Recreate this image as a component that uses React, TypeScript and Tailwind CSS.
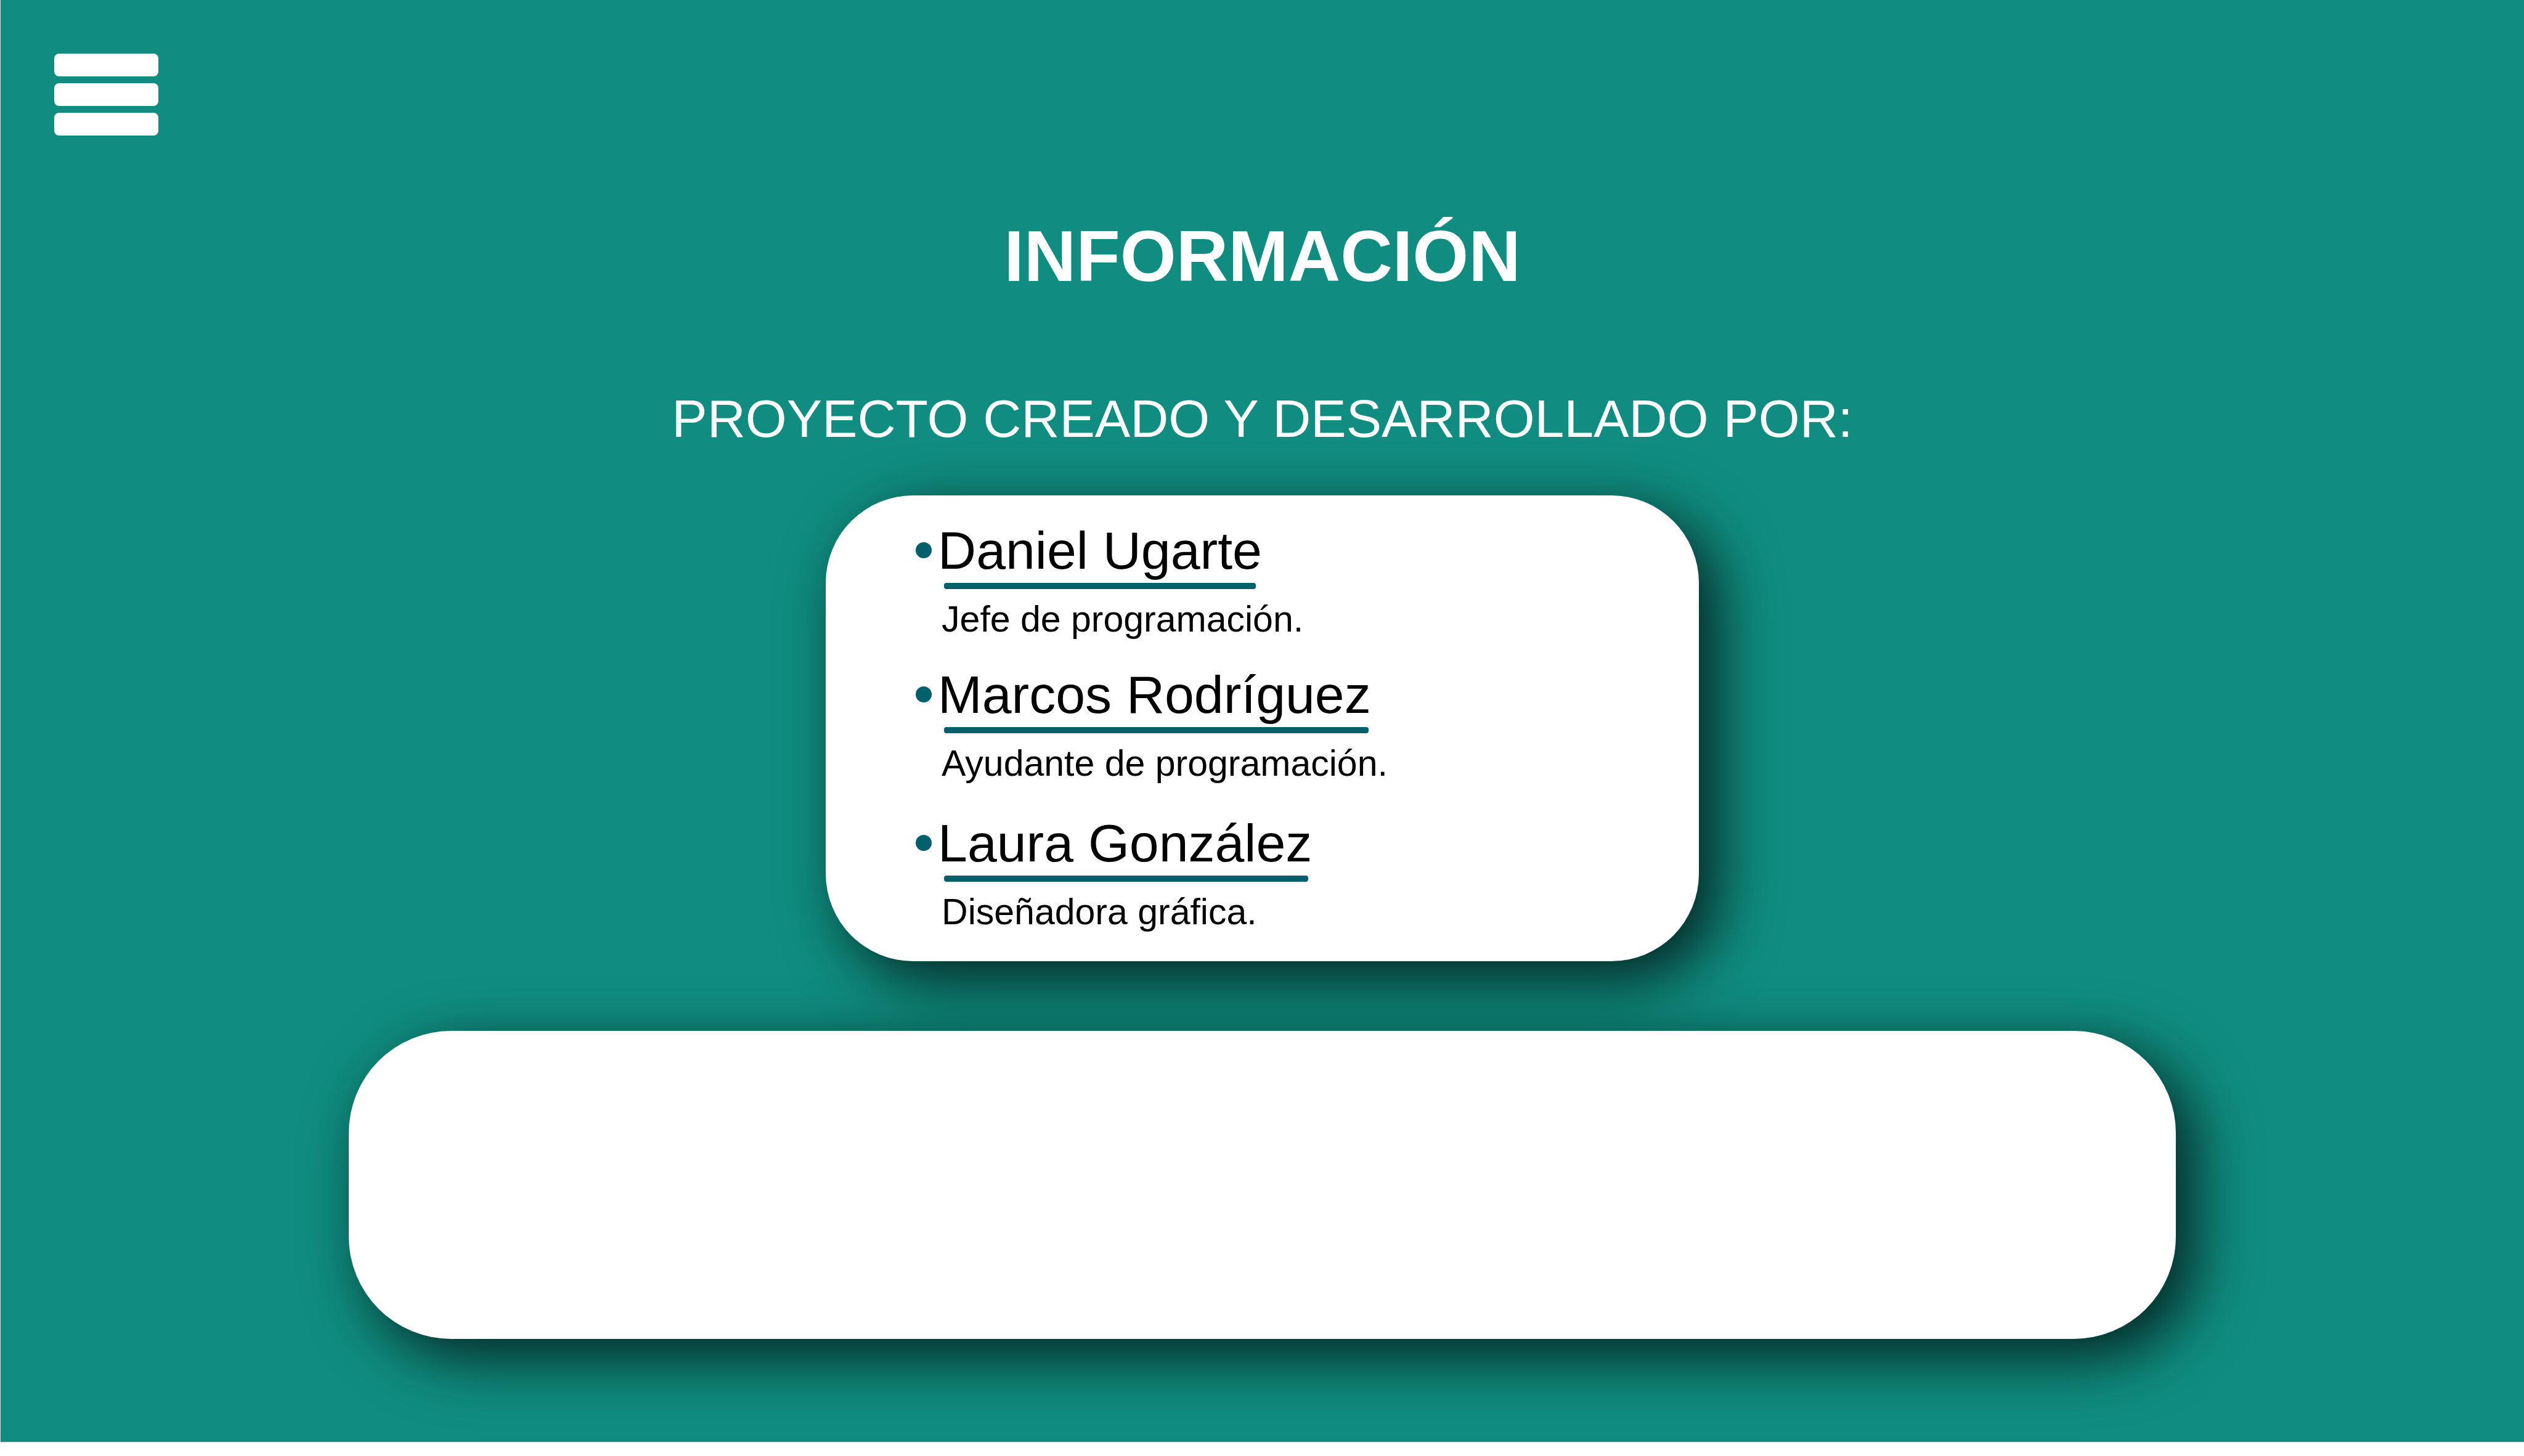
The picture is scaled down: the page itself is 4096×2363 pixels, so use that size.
type Member = {
  name: string;
  role: string;
  rule: string;
  spacing: string;
};

const members: Member[] = [
  { name: "Daniel Ugarte", role: "Jefe de programación.", rule: "mr-[10px]", spacing: "mb-[41px]" },
  { name: "Marcos Rodríguez", role: "Ayudante de programación.", rule: "mr-1", spacing: "mb-12" },
  { name: "Laura González", role: "Diseñadora gráfica.", rule: "mr-[6px]", spacing: "mb-0" },
];

function MenuButton() {
  return (
    <button
      type="button"
      aria-label="Abrir menú"
      className="flex w-[169px] cursor-pointer flex-col gap-[11px]"
    >
      <span className="h-[37px] w-full rounded-lg bg-white" />
      <span className="h-[37px] w-full rounded-lg bg-white" />
      <span className="h-[37px] w-full rounded-lg bg-white" />
    </button>
  );
}

function MemberItem({ name, role, rule, spacing }: Member) {
  return (
    <li className={`flex gap-[10px] ${spacing}`}>
      <span className="mt-[35px] size-[26px] shrink-0 rounded-full bg-[#01606b]" />
      <div className="flex flex-col items-start">
        <div className="w-fit">
          <h3 className="text-[86px] leading-[96px] whitespace-nowrap">{name}</h3>
          <div className={`mt-[5px] ml-[10px] h-[10px] rounded bg-[#01606b] ${rule}`} />
        </div>
        <p className="mt-4 ml-[6px] text-[59px] leading-[66px] whitespace-nowrap">{role}</p>
      </div>
    </li>
  );
}

export default function App() {
  return (
    <div className="flex min-h-screen flex-col bg-white pb-[22px] font-['Liberation_Sans',Arial,sans-serif]">
      <div className="flex flex-1 flex-col border-b border-l border-[#c3ddd9] bg-[#108d80] pb-[167px]">
        <header className="flex pt-[87px] pl-[87px]">
          <MenuButton />
        </header>
        <main className="flex flex-col items-center text-black">
          <h1 className="mt-[131px] text-[117px] leading-[130px] font-bold text-white">INFORMACIÓN</h1>
          <h2 className="mt-[150px] text-[86px] leading-[96px] text-white">
            PROYECTO CREADO Y DESARROLLADO POR:
          </h2>
          <section
            aria-label="Equipo"
            className="mt-[77px] w-[34.6%] min-w-fit rounded-[142px] bg-white pt-[41px] pb-[47px] pl-[146px] shadow-[30px_30px_100px_rgba(0,0,0,0.75)]"
          >
            <ul>
              {members.map((m) => (
                <MemberItem key={m.name} {...m} />
              ))}
            </ul>
          </section>
          <section
            aria-label="Información adicional"
            className="mt-[113px] min-h-[500px] w-[72.4%] rounded-[166px] bg-white shadow-[30px_30px_100px_rgba(0,0,0,0.75)]"
          />
        </main>
      </div>
    </div>
  );
}
